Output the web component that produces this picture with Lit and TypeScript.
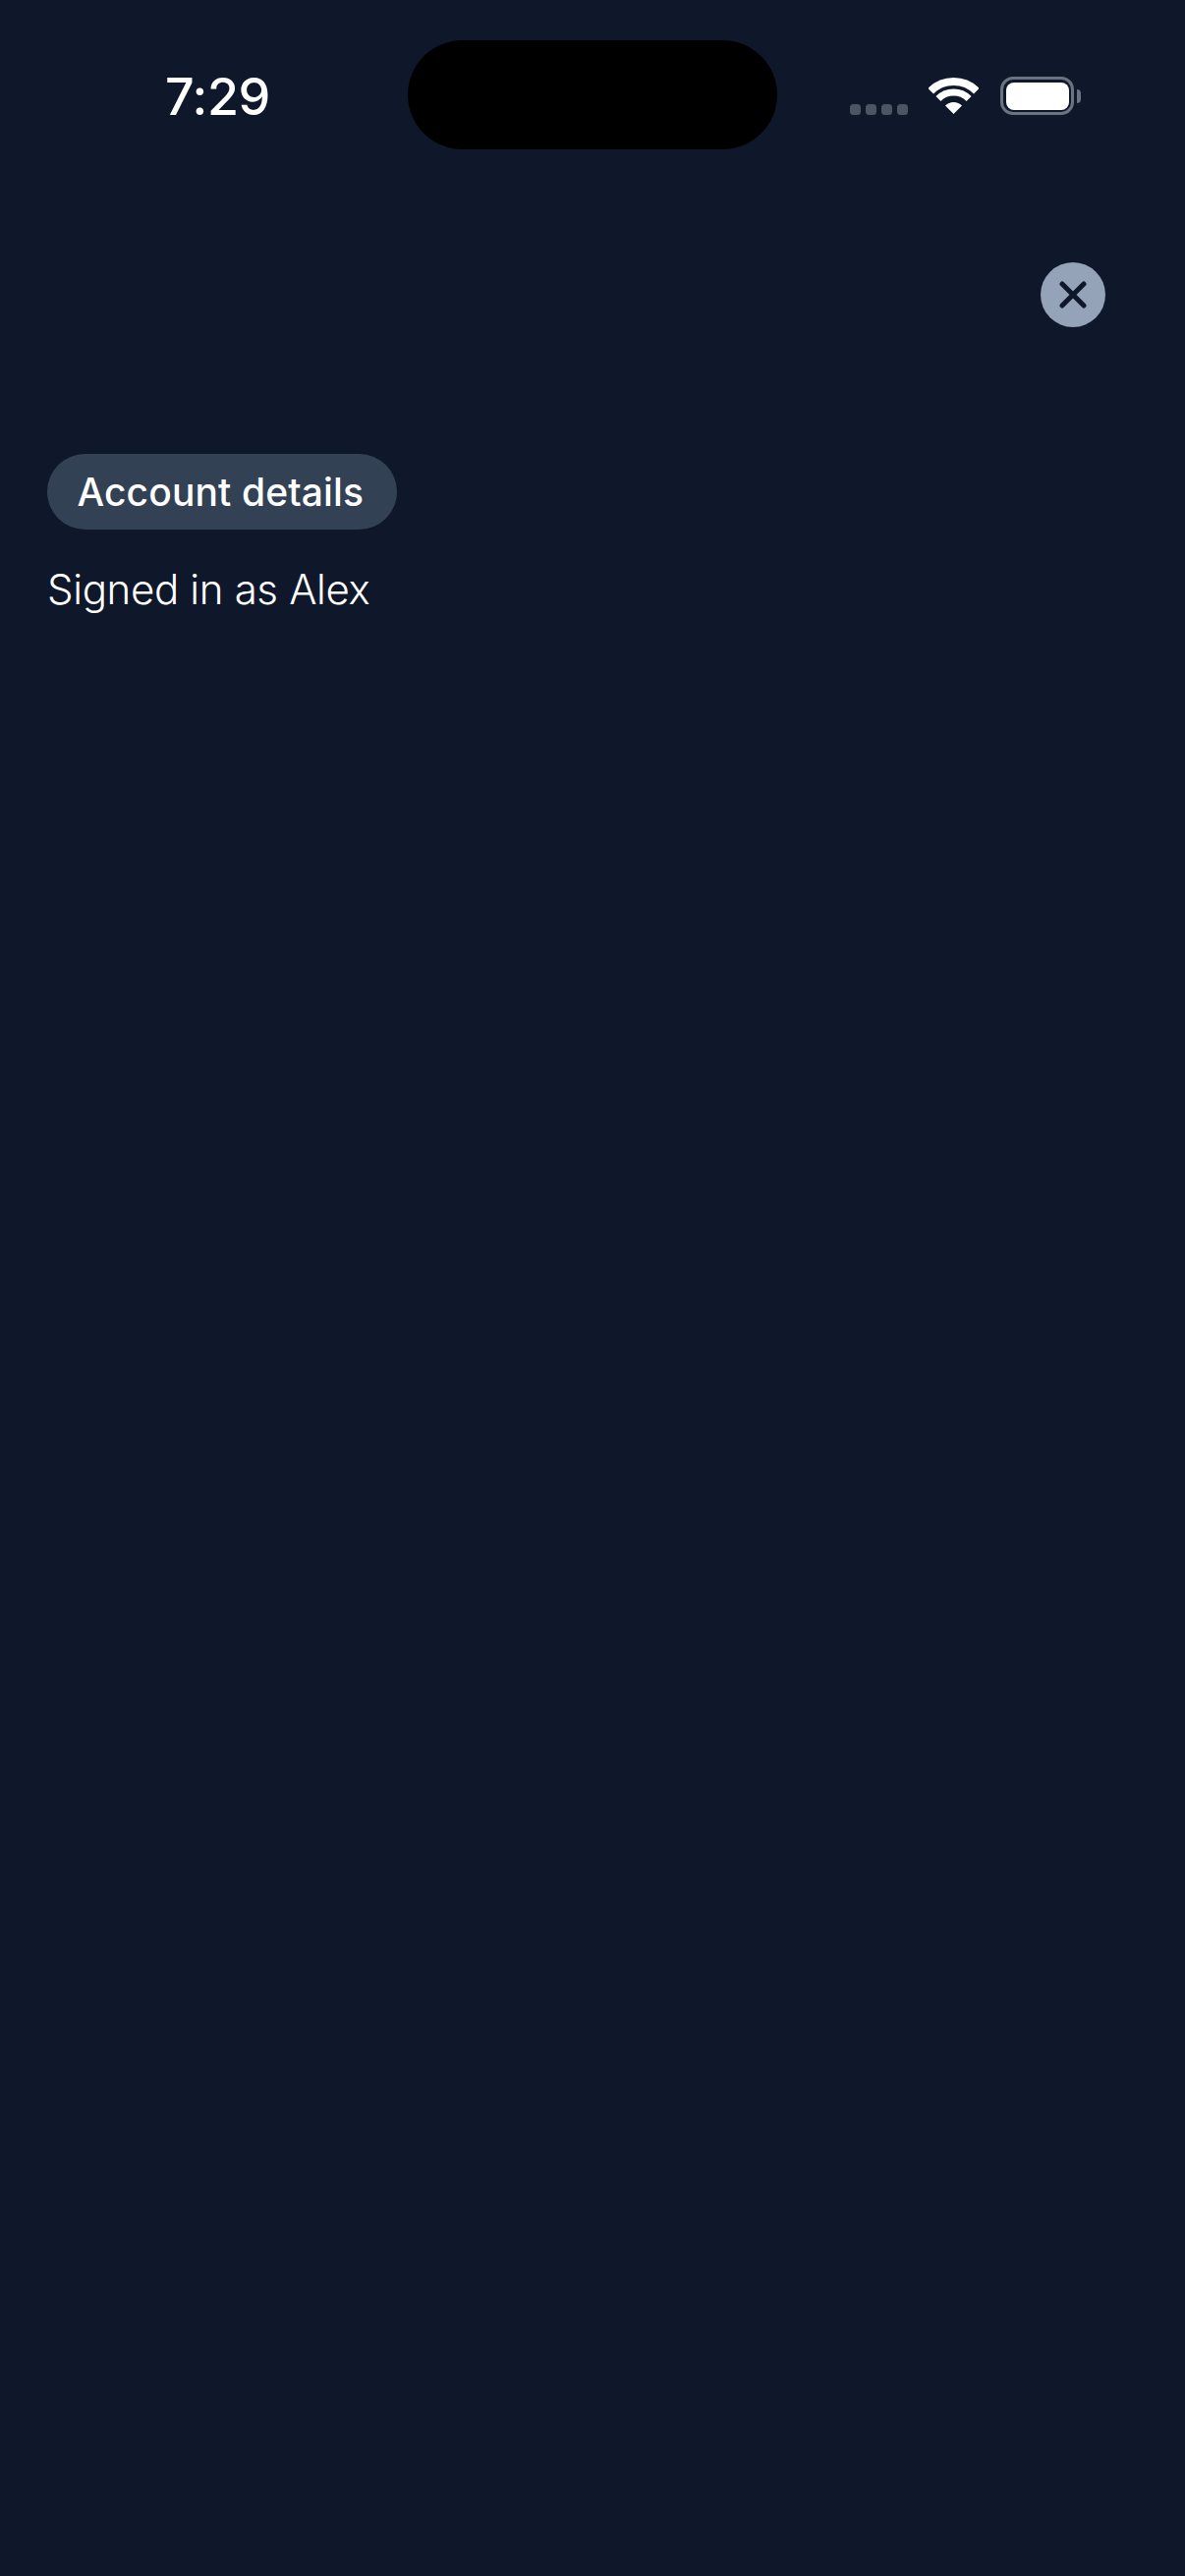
import { LitElement, html, css } from "lit";
import { customElement } from "lit/decorators.js";

@customElement("app-root")
export class AppRoot extends LitElement {
  static styles = css`
    :host {
      display: block;
      width: 1206px;
      height: 2622px;
      background: #0f172a;
      color: #fff;
      font-family: Inter, "Noto Sans", sans-serif;
      overflow: hidden;
    }
    .status {
      display: flex;
      align-items: flex-start;
      height: 267px;
      box-sizing: border-box;
      padding-top: 41px;
    }
    .time {
      width: 415px;
      box-sizing: border-box;
      padding: 34px 0 0 168px;
      font-size: 52px;
      line-height: 48px;
      font-weight: 550;
      letter-spacing: -0.4px;
    }
    .island {
      flex: none;
      width: 376px;
      height: 111px;
      border-radius: 55.5px;
      background: #000;
    }
    .indicators {
      flex: none;
      display: flex;
      align-items: flex-end;
      height: 76px;
      margin-left: 74px;
    }
    .dots {
      display: flex;
      gap: 5px;
      margin-bottom: 0.5px;
    }
    .dot {
      width: 11px;
      height: 11px;
      border-radius: 3.5px;
      background: #4b5563;
    }
    .wifi {
      display: block;
      width: 51px;
      height: 38px;
      margin-left: 21px;
    }
    .battery {
      display: flex;
      align-items: center;
      margin-left: 22px;
    }
    .shell {
      width: 75px;
      height: 39px;
      box-sizing: border-box;
      border: 3.5px solid #6b7280;
      border-radius: 13px;
      padding: 2.5px;
    }
    .fill {
      height: 100%;
      border-radius: 8px;
      background: #fff;
    }
    .nub {
      width: 4px;
      height: 14px;
      margin-left: 3px;
      border-radius: 0 7px 7px 0;
      background: #6b7280;
    }
    .close-row {
      display: flex;
      justify-content: flex-end;
      padding-right: 81px;
    }
    .close {
      display: flex;
      align-items: center;
      justify-content: center;
      width: 66px;
      height: 66px;
      padding: 0;
      border: 0;
      border-radius: 50%;
      background: #94a3b8;
    }
    .close svg {
      display: block;
      width: 28px;
      height: 28px;
    }
    .content {
      padding: 129px 48px 0;
    }
    .pill {
      display: inline-flex;
      align-items: center;
      height: 77px;
      box-sizing: border-box;
      padding: 0 33.5px 0 30.5px;
      border-radius: 38.5px;
      background: #334155;
      font-size: 39px;
      font-weight: 550;
      letter-spacing: 0.12px;
    }
    .signed {
      margin-top: 36px;
      font-size: 42px;
      line-height: 50px;
      font-weight: 350;
      letter-spacing: -0.35px;
      color: #fff;
    }
  `;

  render() {
    return html`
      <div class="status">
        <div class="time">7:29</div>
        <div class="island"></div>
        <div class="indicators">
          <div class="dots">
            <span class="dot"></span><span class="dot"></span><span class="dot"></span><span class="dot"></span>
          </div>
          <svg class="wifi" viewBox="0 0 51 38" fill="none">
            <path d="M2.17 13.67A33 33 0 0 1 48.83 13.67" stroke="#fff" stroke-width="8" />
            <path d="M9.94 21.44A22 22 0 0 1 41.06 21.44" stroke="#fff" stroke-width="7" />
            <path d="M25.5 37L17 28.5A12 12 0 0 1 34 28.5Z" fill="#fff" />
          </svg>
          <div class="battery">
            <div class="shell"><div class="fill"></div></div>
            <div class="nub"></div>
          </div>
        </div>
      </div>
      <div class="close-row">
        <button class="close" aria-label="Close">
          <svg viewBox="0 0 28 28" fill="none">
            <path d="M3 3L25 25M25 3L3 25" stroke="#0f172a" stroke-width="5" stroke-linecap="round" />
          </svg>
        </button>
      </div>
      <div class="content">
        <div class="pill">Account details</div>
        <div class="signed">Signed in as Alex</div>
      </div>
    `;
  }
}
